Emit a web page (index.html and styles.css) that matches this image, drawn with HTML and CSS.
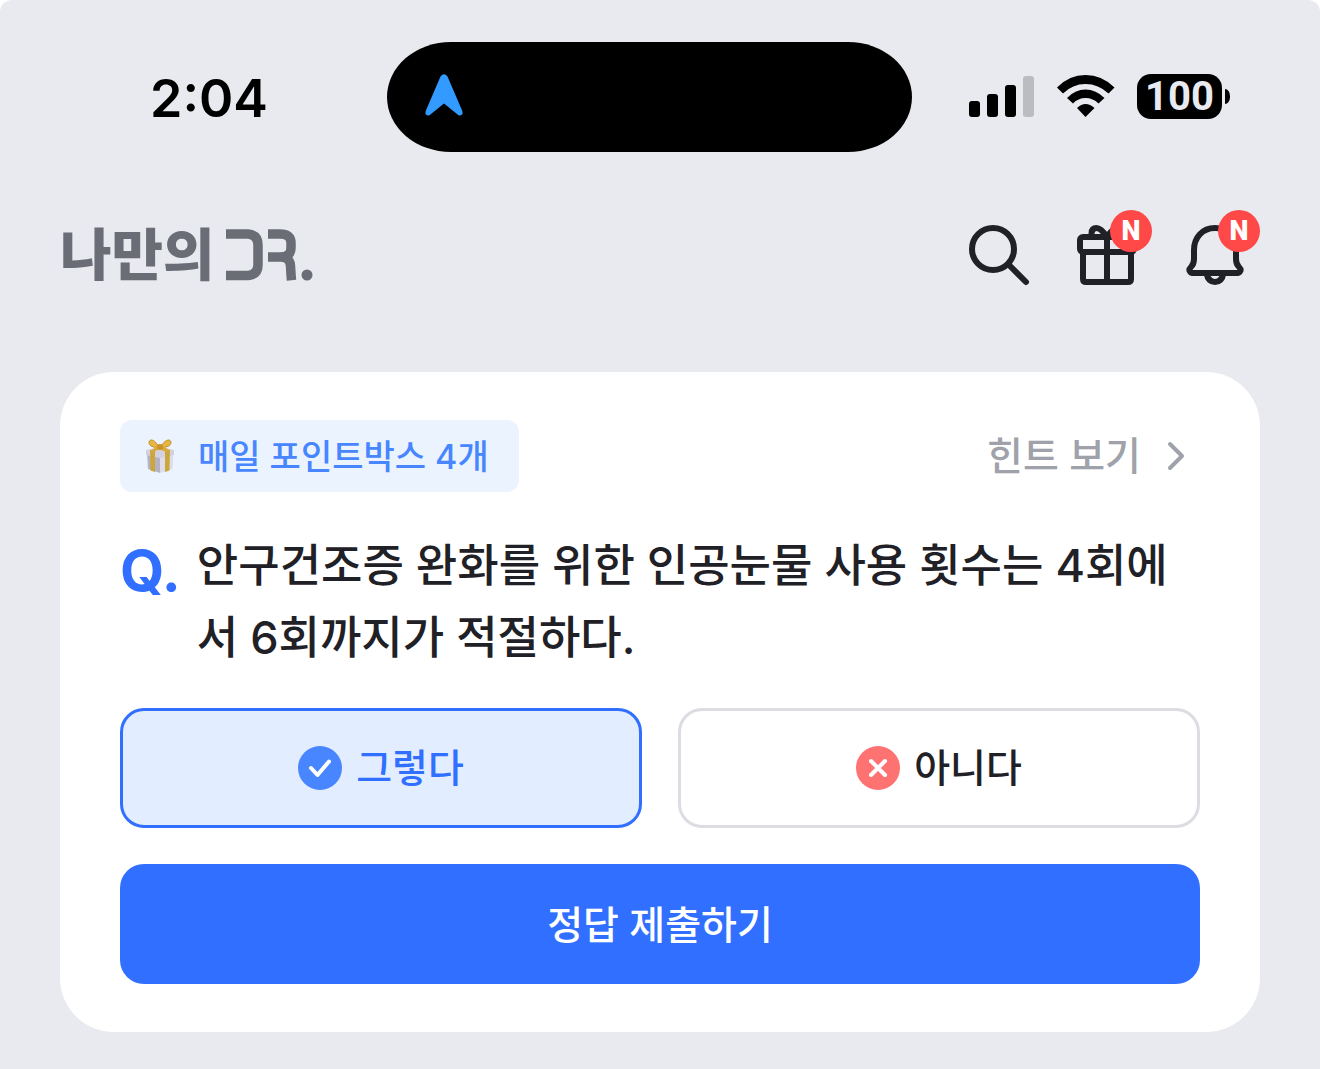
FILE: index.html
```html
<!DOCTYPE html>
<html lang="ko">
<head>
<meta charset="utf-8">
<meta name="viewport" content="width=device-width, initial-scale=1">
<title>나만의 DR.</title>
<link rel="stylesheet" href="styles.css">
</head>
<body>
<div class="screen">
  <div class="status">
    <time class="status-time">2:04</time>
    <div class="island">
      <svg width="38" height="42" viewBox="0 0 38 42" aria-hidden="true"><path d="M15.500 2.500Q19-2 22.500 2.500L37.300 37Q38.500 42 33.500 41.300L19 29.500L4.500 41.300Q-.5 42 .7 37Z" fill="#339bff"/></svg>
    </div>
    <div class="status-icons">
      <svg width="66" height="42" viewBox="0 0 66 42" aria-hidden="true"><rect y="26" width="11" height="16" rx="3"/><rect x="18" y="19" width="11" height="23" rx="3"/><rect x="36" y="10" width="11" height="32" rx="3"/><rect x="54" y="1" width="11" height="41" rx="3" fill="#bbbcc0"/></svg>
      <svg width="58" height="42" viewBox="0 0 58 42" aria-hidden="true"><path d="M0 12.500Q12 0 28.500 0T57.500 12.500L51.500 18.500Q41.500 9 28.500 9T6 18.500ZM10 23Q18 14.500 28.500 14.500T47.500 23L41.500 28.500Q36 23 28.500 23T16 28.500ZM20 33Q28.500 25 37.500 33L28.500 42Z"/></svg>
      <div class="battery">100</div>
    </div>
  </div>

  <header class="header">
    <a class="logo" href="#" aria-label="나만의 DR.">
      <span>나만의</span>
      <svg width="90" height="52" viewBox="0 0 90 52" aria-hidden="true"><g fill="none" stroke="#6a6d76" stroke-width="9.500"><path d="M1 5H23Q33 6 33 16V36Q33 45.500 23 46.500H1"/><path d="M43 5H55Q66 5 66 14V19Q66 28 55 28H43M55 28Q65 28 65.500 37Q66 46 66.500 51.300"/></g><circle cx="82" cy="46" r="5.500" fill="#6a6d76"/></svg>
    </a>
    <nav class="actions">
      <button class="action" type="button" aria-label="검색">
        <svg viewBox="0 0 72 72"><circle cx="30" cy="30" r="21"/><path d="M46 46L63 63"/></svg>
      </button>
      <button class="action" type="button" aria-label="선물">
        <svg viewBox="0 0 72 72"><rect x="9" y="18" width="54" height="15" rx="3"/><path d="M12 33V60Q12 63 15 63H57Q60 63 60 60V33M36 18V63M20.500 18V14.500Q20.500 9 25.500 9Q30 9 36 18Q42 9 46.500 9Q51.500 9 51.500 14.500V18"/></svg>
        <span class="badge">N</span>
      </button>
      <button class="action" type="button" aria-label="알림">
        <svg viewBox="0 0 72 72"><path d="M36 9C23 9 15 19 15 31V40Q15 45 12 48Q9.500 50.500 11 52.500Q12 54 15 54H57Q60 54 61 52.500Q62.500 50.500 60 48Q57 45 57 40V31C57 19 49 9 36 9ZM27.500 54Q29 63 36 63T44.500 54"/></svg>
        <span class="badge">N</span>
      </button>
    </nav>
  </header>

  <main class="card">
    <div class="card-top">
      <div class="tag">
        <svg width="28" height="36" viewBox="0 0 28 36" aria-hidden="true"><path d="M1 14L14 16V35L2 31Z" fill="#b5b2c6"/><path d="M14 16L27.500 14L26.500 31L14 35Z" fill="#dedce9"/><path d="M0 12L13 9L28 12V17L14 20L0 17Z" fill="#d3d1e0"/><path d="M4 12L9 13V34L4.500 32.500ZM19 13L24 12L23.500 32.500L19 34Z" fill="#cba63a"/><path d="M13 10C10 2 4 0 3 4Q2 9 13 10ZM14 10C18 2 24 0 25 4Q26 9 14 10Z" fill="#e6b544" stroke="#c4952d"/><path d="M12 8L4 13L8 14L13 11L20 14L24 12L16 8Z" fill="#dba93a"/><circle cx="14" cy="9" r="3" fill="#c99328"/></svg>
        <span>매일 포인트박스 4개</span>
      </div>
      <a class="hint" href="#">힌트 보기
        <svg width="18" height="30" viewBox="0 0 18 30" aria-hidden="true"><path d="M3 3L15 15L3 27"/></svg>
      </a>
    </div>
    <form class="quiz">
      <div class="question">
        <span class="question-mark">Q.</span>
        <p class="question-text" id="question">안구건조증 완화를 위한 인공눈물 사용 횟수는 4회에서 6회까지가 적절하다.</p>
      </div>
      <div class="choices" role="radiogroup" aria-labelledby="question">
        <label class="choice">
          <input type="radio" name="answer" value="yes" checked>
          <svg width="44" height="44" viewBox="0 0 44 44" aria-hidden="true"><circle cx="22" cy="22" r="22" fill="#4786ff"/><path d="M13 22L19.500 29L31 15.500"/></svg>
          <span>그렇다</span>
        </label>
        <label class="choice">
          <input type="radio" name="answer" value="no">
          <svg width="44" height="44" viewBox="0 0 44 44" aria-hidden="true"><circle cx="22" cy="22" r="22" fill="#ff7272"/><path d="M15 15L29 29M29 15L15 29"/></svg>
          <span>아니다</span>
        </label>
      </div>
      <button class="submit" type="submit">정답 제출하기</button>
    </form>
  </main>
</div>
</body>
</html>
```

FILE: styles.css
```css
* {
  box-sizing: border-box;
}

body {
  margin: 0;
  background: #fff;
  color: #1f2126;
  font-family: Inter, "Noto Sans CJK KR", sans-serif;
  font-weight: 500;
}

button {
  border: 0;
  padding: 0;
  font: inherit;
  cursor: pointer;
}

a {
  text-decoration: none;
}

svg {
  flex: none;
}

.screen {
  min-height: 100vh;
  padding: 42px 0 36px;
  border-radius: 12px 12px 0 0;
  background: #e9eaef;
}

.status {
  display: grid;
  grid-template-columns: 1fr 525px 1fr;
  align-items: center;
  padding-right: 21px;
  color: #000;
}

.status-time {
  padding: 4px 0 0 150px;
  font-size: 52px;
  font-weight: 600;
  line-height: 64px;
}

.island {
  display: flex;
  align-items: center;
  height: 110px;
  padding: 0 38px 4px;
  border-radius: 64px / 55px;
  background: #000;
}

.status-icons {
  display: flex;
  align-items: center;
  justify-content: flex-end;
  gap: 22px;
  padding: 0 77px 2px 0;
}

.battery {
  position: relative;
  width: 85px;
  border-radius: 14px;
  background: #000;
  color: #e9eaef;
  font: 700 40px/45px Roboto, sans-serif;
  text-align: center;
}

.battery::after {
  content: "";
  position: absolute;
  top: 15px;
  right: -8px;
  width: 5px;
  height: 15px;
  border-radius: 0 5px 5px 0 / 0 7px 7px 0;
  background: #000;
}

.header {
  display: flex;
  align-items: center;
  justify-content: space-between;
  margin-top: 67px;
  padding: 0 69px 0 60px;
}

.logo {
  display: flex;
  align-items: center;
  gap: 10px;
  color: #6a6d76;
  font-size: 56px;
  font-weight: 900;
  line-height: 72px;
}

.actions {
  display: flex;
  gap: 36px;
}

.action {
  position: relative;
  width: 72px;
  height: 72px;
  background: none;
}

.action svg {
  display: block;
  fill: none;
  stroke: #1f2126;
  stroke-width: 6;
  stroke-linecap: round;
  stroke-linejoin: round;
}

.badge {
  position: absolute;
  top: -9px;
  right: -9px;
  width: 42px;
  border-radius: 50%;
  background: #ff4848;
  color: #fff;
  font: 900 27px/42px Roboto, sans-serif;
  text-align: center;
}

.card {
  margin: 81px 60px 0;
  padding: 48px 60px;
  border-radius: 54px;
  background: #fff;
}

.card-top {
  display: flex;
  align-items: center;
  justify-content: space-between;
}

.tag {
  display: flex;
  align-items: center;
  gap: 24px;
  height: 72px;
  padding: 0 30px 0 26px;
  border-radius: 12px;
  background: #ebf3ff;
  color: #4786ff;
  font-size: 34px;
  line-height: 72px;
}

.tag span {
  padding-top: 2px;
}

.hint {
  display: flex;
  align-items: center;
  gap: 26px;
  padding-right: 15px;
  color: #9fa2aa;
  font-size: 39px;
  line-height: 72px;
}

.hint svg {
  fill: none;
  stroke: currentColor;
  stroke-width: 4;
  stroke-linecap: round;
  stroke-linejoin: round;
}

.question {
  display: flex;
  gap: 16px;
  margin-top: 38px;
}

.question-mark {
  color: #306fff;
  font-size: 57px;
  font-weight: 700;
  line-height: 82px;
}

.question-text {
  flex: 1;
  margin: 0;
  font-size: 45px;
  line-height: 72px;
  word-break: break-all;
}

.choices {
  display: grid;
  grid-template-columns: 1fr 1fr;
  gap: 36px;
  margin-top: 34px;
}

.choice {
  position: relative;
  display: flex;
  align-items: center;
  justify-content: center;
  gap: 14px;
  height: 120px;
  border: 3px solid #dcdde2;
  border-radius: 24px;
  font-size: 39px;
  cursor: pointer;
}

.choice span {
  padding-bottom: 6px;
}

.choice:has(input:checked) {
  border-color: #306fff;
  background: #e2eeff;
  color: #306fff;
}

.choice input {
  position: absolute;
  inset: 0;
  margin: 0;
  opacity: 0;
}

.choice path {
  fill: none;
  stroke: #fff;
  stroke-width: 4;
  stroke-linecap: round;
  stroke-linejoin: round;
}

.submit {
  width: 100%;
  height: 120px;
  margin-top: 36px;
  padding-bottom: 4px;
  border-radius: 24px;
  background: #306fff;
  color: #fff;
  font-size: 39px;
}
```
